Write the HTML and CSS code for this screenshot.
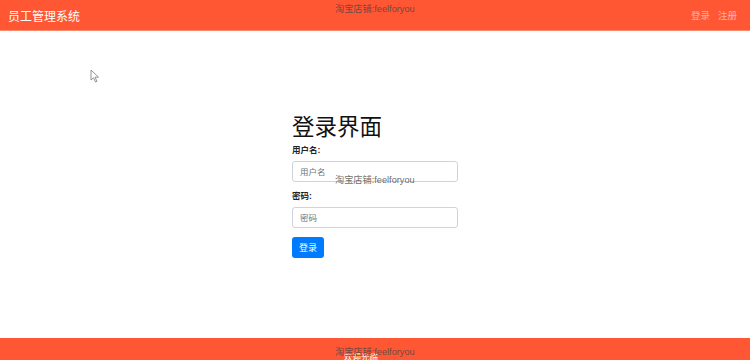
FILE: index.html
```html
<!DOCTYPE html>
<html>
<head>
  <title>员工管理系统</title>
  <link rel="stylesheet" href="styles.css">
</head>
<body>
  <div class="navbar">
    <span class="brand">员工管理系统</span>
    <div class="nav-links">
      <a href="#">登录</a>
      <a href="#">注册</a>
    </div>
    <span class="mark mark-top">淘宝店铺:feelforyou</span>
  </div>

  <div class="main">
    <form class="login">
      <h1>登录界面</h1>
      <label>用户名:</label>
      <input type="text" placeholder="用户名">
      <label>密码:</label>
      <input type="password" placeholder="密码">
      <button type="button">登录</button>
      <span class="mark mark-mid">淘宝店铺:feelforyou</span>
    </form>
  </div>

  <div class="footer">
    <span class="welcome">欢迎光临</span>
    <span class="mark mark-foot">淘宝店铺:feelforyou</span>
  </div>

  <svg class="cursor" width="10" height="14" viewBox="0 0 10 14">
    <path d="M1 1 L1 11 L3.5 8.8 L5.5 13 L7 12.3 L5 8.2 L8.5 8.2 Z" fill="#fff" stroke="#888" stroke-width="0.9"/>
  </svg>
</body>
</html>
```

FILE: styles.css
```css
html, body {
  margin: 0;
  height: 100%;
}
body {
  font-family: "Liberation Sans", Arial, "Noto Sans CJK SC", sans-serif;
  background-color: #fff;
  color: #212529;
  display: flex;
  flex-direction: column;
  position: relative;
  overflow: hidden;
}

.navbar {
  height: 30px;
  background-color: #ff5733;
  border-bottom: 1px solid #ff8b6e;
  display: flex;
  align-items: center;
  justify-content: space-between;
  padding: 0 13px 0 8px;
  position: relative;
}
.brand {
  color: #fff;
  font-size: 12px;
}
.nav-links {
  display: flex;
  gap: 8px;
}
.nav-links a {
  color: rgba(255, 255, 255, 0.55);
  text-decoration: none;
  font-size: 9.5px;
}

.main {
  flex: 1;
  display: flex;
  justify-content: center;
  padding-top: 83px;
}
.login {
  width: 166px;
  display: flex;
  flex-direction: column;
  align-items: flex-start;
  position: relative;
}
h1 {
  font-size: 22.5px;
  font-weight: 400;
  margin: 0 0 3px 0;
  line-height: 28px;
  color: #111;
}
label {
  font-size: 8.5px;
  font-weight: 600;
  margin-bottom: 5px;
  line-height: 11px;
}
input {
  box-sizing: border-box;
  width: 166px;
  height: 21px;
  border: 1px solid #ced4da;
  border-radius: 3px;
  padding: 0 7px;
  font-family: inherit;
  font-size: 8.5px;
  margin-bottom: 9px;
  margin-left: 0;
}
input::placeholder {
  color: #6c757d;
}
button {
  margin-top: 0;
  width: 32px;
  height: 21px;
  border: none;
  border-radius: 3px;
  background-color: #007bff;
  color: #fff;
  font-family: inherit;
  font-size: 9px;
  padding: 0;
}

.footer {
  height: 22px;
  background-color: #ff5733;
  display: flex;
  justify-content: center;
  align-items: flex-end;
  position: relative;
}
.welcome {
  color: #fff;
  font-size: 8.5px;
  line-height: 10px;
  margin-bottom: -2px;
  margin-left: -28px;
}

.mark {
  position: absolute;
  color: rgba(70, 70, 70, 0.8);
  font-size: 9.2px;
  white-space: nowrap;
}
.mark-top {
  left: 335px;
  top: 1px;
}
.mark-mid {
  left: 43px;
  top: 58px;
}
.mark-foot {
  left: 335px;
  top: 6px;
}

.cursor {
  position: absolute;
  left: 90px;
  top: 69px;
}
```
